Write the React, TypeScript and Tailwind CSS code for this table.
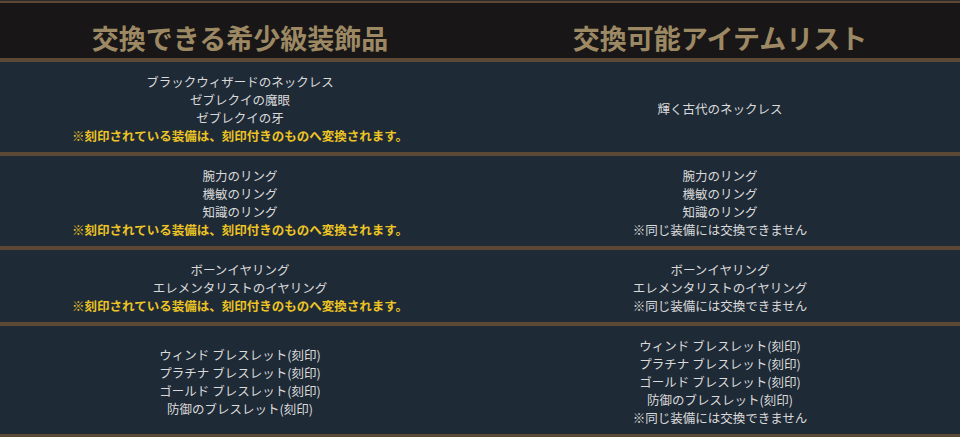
import React from 'react';

const note = '※刻印されている装備は、刻印付きのものへ変換されます。';
const same = '※同じ装備には交換できません';

export default function App() {
  const rows = [
    {
      from: ['ブラックウィザードのネックレス', 'ゼブレクイの魔眼', 'ゼブレクイの牙'],
      fromNote: true,
      to: ['輝く古代のネックレス'],
      toNote: false,
    },
    {
      from: ['腕力のリング', '機敏のリング', '知識のリング'],
      fromNote: true,
      to: ['腕力のリング', '機敏のリング', '知識のリング'],
      toNote: true,
    },
    {
      from: ['ボーンイヤリング', 'エレメンタリストのイヤリング'],
      fromNote: true,
      to: ['ボーンイヤリング', 'エレメンタリストのイヤリング'],
      toNote: true,
    },
    {
      from: ['ウィンド ブレスレット(刻印)', 'プラチナ ブレスレット(刻印)', 'ゴールド ブレスレット(刻印)', '防御のブレスレット(刻印)'],
      fromNote: false,
      to: ['ウィンド ブレスレット(刻印)', 'プラチナ ブレスレット(刻印)', 'ゴールド ブレスレット(刻印)', '防御のブレスレット(刻印)'],
      toNote: true,
    },
  ];

  return (
    <div className="w-[960px] h-[437px] overflow-hidden bg-[#1f2a37] font-['Noto_Sans_CJK_JP','Noto_Sans',sans-serif]">
      <div className="h-px bg-[#2b2a2a]"></div>
      <div className="h-[2px] bg-[#5b4936]"></div>

      {/* Header */}
      <div className="grid grid-cols-2 h-[55px] bg-[#181616] border-b-4 border-[#5b4936] box-content">
        <div className="flex items-end justify-center pb-[2px]">
          <h2 className="text-[27px] leading-[36px] font-bold text-[#9c8964]">交換できる希少級装飾品</h2>
        </div>
        <div className="flex items-end justify-center pb-[2px]">
          <h2 className="text-[27px] leading-[36px] font-bold text-[#9c8964]">交換可能アイテムリスト</h2>
        </div>
      </div>

      {/* Rows */}
      {rows.map((row, i) => (
        <div key={i} className="grid grid-cols-2 border-b-4 border-[#5b4936]">
          <div className="flex flex-col items-center justify-center pt-[11px] pb-[7px] text-[12.5px] leading-[18px] text-[#dadada]">
            {row.from.map((t) => (
              <div key={t}>{t}</div>
            ))}
            {row.fromNote && <div className="font-bold text-[#ecc424]">{note}</div>}
          </div>
          <div className="flex flex-col items-center justify-center pt-[11px] pb-[7px] text-[12.5px] leading-[18px] text-[#dadada]">
            {row.to.map((t) => (
              <div key={t}>{t}</div>
            ))}
            {row.toNote && <div>{same}</div>}
          </div>
        </div>
      ))}
    </div>
  );
}
